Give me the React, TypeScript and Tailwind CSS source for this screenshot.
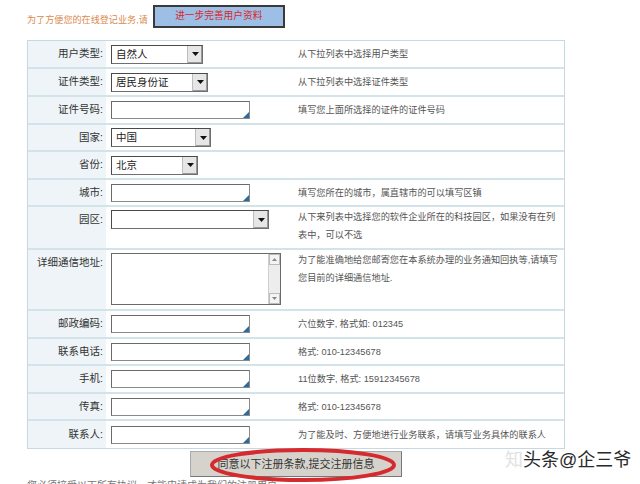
import React from 'react';

type Row = {
  label: string;
  h: string;
  control: React.ReactNode;
  desc?: string;
};

function Select({ value, w }: { value: string; w: string }) {
  return (
    <div className={`${w} h-[19px] flex border border-[#6f6f6f] border-t-[#4a4a4a] border-l-[#4a4a4a] bg-white`}>
      <div className="flex-1 px-[4px] text-[10.5px] leading-[17px] text-[#222]">{value}</div>
      <div className="w-[15px] h-full bg-[#e6e6e6] border-l border-[#bdbdbd] flex items-center justify-center shadow-[inset_-1px_-1px_0_#999]">
        <svg width="7" height="4" viewBox="0 0 7 4">
          <path d="M0 0h7L3.5 4z" fill="#111" />
        </svg>
      </div>
    </div>
  );
}

function TextInput() {
  return (
    <div className="relative w-[139px] h-[18px] bg-white border border-[#8a8a8a] border-t-[#6a6a6a] border-l-[#6a6a6a]">
      <svg className="absolute right-0 bottom-0" width="6" height="6" viewBox="0 0 6 6">
        <path d="M6 0v6H0z" fill="#2d6aa0" />
      </svg>
    </div>
  );
}

function Area() {
  return (
    <div className="w-[170px] h-[52px] flex bg-white border border-[#6a6a6a]">
      <div className="flex-1" />
      <div className="w-[12px] h-full bg-[#ededed] border-l border-[#cfcfcf] flex flex-col justify-between">
        <div className="h-[11px] bg-[#f4f4f4] border border-[#bbb] flex items-center justify-center">
          <svg width="5" height="3" viewBox="0 0 5 3"><path d="M0 3h5L2.5 0z" fill="#888" /></svg>
        </div>
        <div className="h-[11px] bg-[#f4f4f4] border border-[#bbb] flex items-center justify-center">
          <svg width="5" height="3" viewBox="0 0 5 3"><path d="M0 0h5L2.5 3z" fill="#888" /></svg>
        </div>
      </div>
    </div>
  );
}

const rows: Row[] = [
  { label: '用户类型:', h: 'h-[28px]', control: <Select value="自然人" w="w-[92px]" />, desc: '从下拉列表中选择用户类型' },
  { label: '证件类型:', h: 'h-[28px]', control: <Select value="居民身份证" w="w-[97px]" />, desc: '从下拉列表中选择证件类型' },
  { label: '证件号码:', h: 'h-[28px]', control: <TextInput />, desc: '填写您上面所选择的证件的证件号码' },
  { label: '国家:', h: 'h-[27px]', control: <Select value="中国" w="w-[100px]" /> },
  { label: '省份:', h: 'h-[28px]', control: <Select value="北京" w="w-[87px]" /> },
  { label: '城市:', h: 'h-[27px]', control: <TextInput />, desc: '填写您所在的城市，属直辖市的可以填写区镇' },
  { label: '园区:', h: 'h-[43px]', control: <Select value="" w="w-[158px]" />, desc: '从下来列表中选择您的软件企业所在的科技园区，如果没有在列表中，可以不选' },
  { label: '详细通信地址:', h: 'h-[61px]', control: <Area />, desc: '为了能准确地给您邮寄您在本系统办理的业务通知回执等,请填写您目前的详细通信地址.' },
  { label: '邮政编码:', h: 'h-[28px]', control: <TextInput />, desc: '六位数字, 格式如: 012345' },
  { label: '联系电话:', h: 'h-[27px]', control: <TextInput />, desc: '格式: 010-12345678' },
  { label: '手机:', h: 'h-[28px]', control: <TextInput />, desc: '11位数字, 格式: 15912345678' },
  { label: '传真:', h: 'h-[27px]', control: <TextInput />, desc: '格式: 010-12345678' },
  { label: '联系人:', h: 'h-[27px]', control: <TextInput />, desc: '为了能及时、方便地进行业务联系，请填写业务具体的联系人' },
];

export default function App() {
  return (
    <div className="relative w-[640px] h-[484px] overflow-hidden bg-white font-['Liberation_Sans','Noto_Sans_CJK_SC',sans-serif]">
      {/* top notice */}
      <div className="flex items-start gap-[5px] pl-[27px] pt-[5px] h-[40px]">
        <span className="text-[9.1px] text-[#d98a4e] mt-[9px] whitespace-nowrap">为了方便您的在线登记业务,请</span>
        <div className="w-[132px] h-[23px] bg-[#9dbfe5] border-2 border-[#3a3a3a] flex items-center justify-center text-[9.7px] text-[#d8262b]">
          进一步完善用户资料
        </div>
      </div>

      {/* form table */}
      <div className="ml-[27px] w-[538px] border border-[#c4d9e4]">
        {rows.map((r, i) => {
          const tall = r.h === 'h-[61px]' || r.h === 'h-[43px]';
          return (
            <div
              key={i}
              className={`grid grid-cols-[78px_185px_1fr] ${r.h} ${i < rows.length - 1 ? 'border-b-2 border-[#d3e3ea]' : ''}`}
            >
              <div className={`bg-[#eef4f7] pr-[3px] text-right text-[10.5px] text-[#333] whitespace-nowrap ${tall ? 'pt-[5px]' : 'flex items-center justify-end'}`}>
                {r.label}
              </div>
              <div className={`pl-[5px] ${tall ? 'pt-[3px]' : 'flex items-center'}`}>
                {r.control}
              </div>
              <div className={`pl-[7px] pr-[2px] text-[9.2px] leading-[18px] text-[#555] ${tall ? 'pt-[1px]' : 'flex items-center'}`}>
                {r.desc}
              </div>
            </div>
          );
        })}
      </div>

      {/* submit */}
      <div className="relative ml-[190px] mt-[2px] w-[212px]">
        <div className="h-[26px] bg-[#d6d3cd] border border-[#aaa] border-b-[#777] border-r-[#777] flex items-center justify-center text-[11px] text-[#333]">
          同意以下注册条款,提交注册信息
        </div>
        <svg className="absolute left-[18px] top-[-4px]" width="190" height="36" viewBox="0 0 190 36">
          <ellipse cx="95" cy="18" rx="91" ry="15" fill="none" stroke="#d52a2e" strokeWidth="4" />
        </svg>
      </div>

      <div className="pl-[27px] mt-[1px] text-[10px] text-[#777] whitespace-nowrap">
        您必须接受以下所有协议，才能申请成为我们的注册用户
      </div>

      {/* watermark */}
      <div className="absolute left-[505px] top-[451px] flex items-baseline text-[18px] leading-none whitespace-nowrap">
        <span className="text-[#e2e2e2]">知</span>
        <span className="text-[#2a2a2a] [text-shadow:0_0_2px_#fff]">头条@企三爷</span>
      </div>
    </div>
  );
}
